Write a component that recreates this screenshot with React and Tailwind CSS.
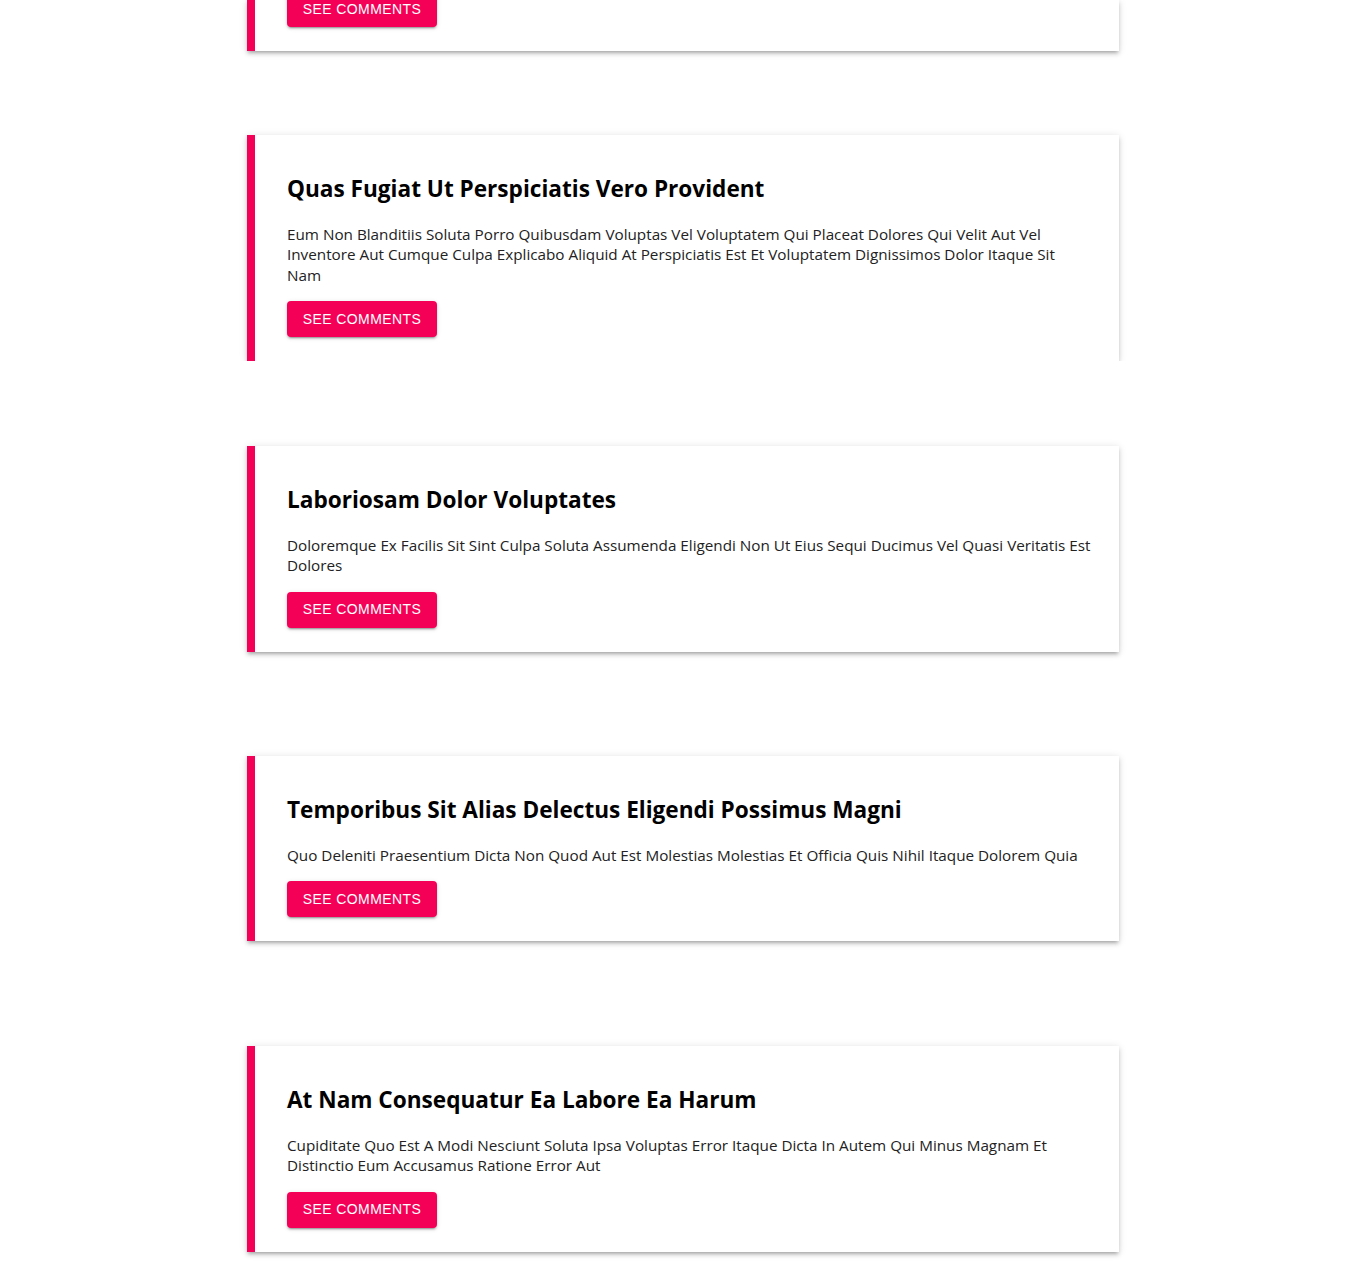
import React from "react";

// body text kept as the lines it wraps into in the capture
const posts = [
  {
    title: "Quas Fugiat Ut Perspiciatis Vero Provident",
    lines: [
      "Eum Non Blanditiis Soluta Porro Quibusdam Voluptas Vel Voluptatem Qui Placeat Dolores Qui Velit Aut Vel",
      "Inventore Aut Cumque Culpa Explicabo Aliquid At Perspiciatis Est Et Voluptatem Dignissimos Dolor Itaque Sit",
      "Nam",
    ],
  },
  {
    title: "Laboriosam Dolor Voluptates",
    lines: [
      "Doloremque Ex Facilis Sit Sint Culpa Soluta Assumenda Eligendi Non Ut Eius Sequi Ducimus Vel Quasi Veritatis Est",
      "Dolores",
    ],
  },
  {
    title: "Temporibus Sit Alias Delectus Eligendi Possimus Magni",
    lines: [
      "Quo Deleniti Praesentium Dicta Non Quod Aut Est Molestias Molestias Et Officia Quis Nihil Itaque Dolorem Quia",
    ],
  },
  {
    title: "At Nam Consequatur Ea Labore Ea Harum",
    lines: [
      "Cupiditate Quo Est A Modi Nesciunt Soluta Ipsa Voluptas Error Itaque Dicta In Autem Qui Minus Magnam Et",
      "Distinctio Eum Accusamus Ratione Error Aut",
    ],
  },
];

const cardShadow =
  "shadow-[0_3px_3px_-2px_rgba(0,0,0,0.2),0_3px_4px_0_rgba(0,0,0,0.14),0_1px_8px_0_rgba(0,0,0,0.12)]";

function SeeComments() {
  return (
    <button
      type="button"
      className="h-9 w-[150px] rounded-[4px] bg-[#f50057] text-white text-[14px] tracking-[0.4px] uppercase shadow-[0_3px_1px_-2px_rgba(0,0,0,0.2),0_2px_2px_0_rgba(0,0,0,0.14),0_1px_5px_0_rgba(0,0,0,0.12)] font-['Liberation_Sans',Arial,sans-serif]"
    >
      See Comments
    </button>
  );
}

function PostCard({ title, lines }) {
  return (
    <div
      className={`bg-white border-l-8 border-[#f50057] px-8 pt-8 pb-6 ${cardShadow}`}
    >
      <h2 className="mt-[2px] h-10 leading-10 text-[22.6px] font-bold text-black whitespace-nowrap">
        {title}
      </h2>
      <p className="mt-[14.5px] text-[15.25px] leading-[20.5px] text-[#222]">
        {lines.map((l, i) => (
          <span key={i} className="block whitespace-nowrap">
            {l}
          </span>
        ))}
      </p>
      <div className="mt-4">
        <SeeComments />
      </div>
    </div>
  );
}

export default function App() {
  return (
    <div className="min-h-[1261px] bg-white font-['Open_Sans','Noto_Sans',sans-serif]">
      <div className="w-[872px] ml-[247px] pb-[10px]">
        {/* first card, mostly scrolled out above */}
        <div
          className={`h-[51px] overflow-hidden bg-white border-l-8 border-[#f50057] px-8 pb-6 flex flex-col justify-end ${cardShadow}`}
        >
          <div className="shrink-0">
            <SeeComments />
          </div>
        </div>

        {/* second card: bottom edge cut in the capture */}
        <div className="mt-[72px] h-[238px] -mx-[12px] px-[12px] pt-[12px] overflow-hidden">
          <PostCard {...posts[0]} />
        </div>

        <div className="mt-[85px]">
          <PostCard {...posts[1]} />
        </div>
        <div className="mt-[104.5px]">
          <PostCard {...posts[2]} />
        </div>
        <div className="mt-[105px]">
          <PostCard {...posts[3]} />
        </div>
      </div>
    </div>
  );
}
